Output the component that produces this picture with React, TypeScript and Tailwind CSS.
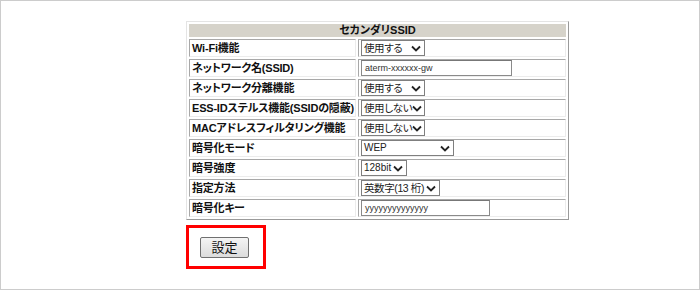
const rows: { label: string; kind: 'select' | 'input'; value: string; w: string }[] = [
  { label: 'Wi-Fi機能', kind: 'select', value: '使用する', w: 'w-[64px]' },
  { label: 'ネットワーク名(SSID)', kind: 'input', value: 'aterm-xxxxxx-gw', w: 'w-[151px]' },
  { label: 'ネットワーク分離機能', kind: 'select', value: '使用する', w: 'w-[64px]' },
  { label: 'ESS-IDステルス機能(SSIDの隠蔽)', kind: 'select', value: '使用しない', w: 'w-[64px]' },
  { label: 'MACアドレスフィルタリング機能', kind: 'select', value: '使用しない', w: 'w-[64px]' },
  { label: '暗号化モード', kind: 'select', value: 'WEP', w: 'w-[93px]' },
  { label: '暗号強度', kind: 'select', value: '128bit', w: 'w-[46px]' },
  { label: '指定方法', kind: 'select', value: '英数字(13 桁)', w: 'w-[79px]' },
  { label: '暗号化キー', kind: 'input', value: 'yyyyyyyyyyyyyy', w: 'w-[129px]' },
]

function Chevron() {
  return (
    <svg width="10" height="7" viewBox="0 0 10 7" className="shrink-0">
      <path d="M1 1.5 L5 5.5 L9 1.5" fill="none" stroke="#222" strokeWidth="1.8" />
    </svg>
  )
}

function FakeSelect({ value, w }: { value: string; w: string }) {
  const small = /^[A-Za-z0-9]/.test(value)
  return (
    <div
      className={`${w} h-[16px] border border-[#7f7f7f] bg-white flex items-center justify-between pl-[2px] pr-[3px] ${
        small ? 'text-[10px]' : 'text-[10.5px] tracking-[-0.4px]'
      } text-[#222] leading-none [font-feature-settings:'palt'] overflow-hidden`}
    >
      <span className="whitespace-nowrap">{value}</span>
      <Chevron />
    </div>
  )
}

function FakeInput({ value, w }: { value: string; w: string }) {
  return (
    <div
      className={`${w} h-[16px] border border-[#8a8a8a] border-t-[#777] bg-white flex items-center pl-[3px] text-[9px] text-[#333] leading-none`}
    >
      {value}
    </div>
  )
}

export default function App() {
  return (
    <div
      className="w-[700px] h-[290px] border border-[#cccccc] bg-white"
      style={{ fontFamily: '"Liberation Sans", "Noto Sans CJK JP", sans-serif' }}
    >
      <div className="pl-[185px] pt-[20px]">
        <table className="table-fixed w-[383px] border-separate border-spacing-[2px] border border-t-[#e4e4e4] border-l-[#e4e4e4] border-r-[#9a9a9a] border-b-[#9a9a9a] bg-white">
          <colgroup>
            <col className="w-[167px]" />
            <col />
          </colgroup>
          <tbody>
            <tr>
              <td
                colSpan={2}
                className="h-[11px] p-0 bg-[#d6d3ca] text-center text-[11px] font-bold text-[#111] leading-[11px] border border-[#d6d3ca] [font-feature-settings:'palt']"
              >
                セカンダリSSID
              </td>
            </tr>
            {rows.map((r) => (
              <tr key={r.label}>
                <td className="h-[18px] p-0 pl-[2px] text-[11px] font-bold text-[#111] leading-none whitespace-nowrap overflow-hidden tracking-[-0.2px] [font-feature-settings:'palt'] border border-t-[#a8a8a8] border-l-[#a8a8a8] border-r-[#ececec] border-b-[#ececec]">
                  {r.label}
                </td>
                <td className="h-[18px] p-0 pl-[2px] border border-t-[#a8a8a8] border-l-[#a8a8a8] border-r-[#ececec] border-b-[#ececec]">
                  {r.kind === 'select' ? <FakeSelect value={r.value} w={r.w} /> : <FakeInput value={r.value} w={r.w} />}
                </td>
              </tr>
            ))}
          </tbody>
        </table>
      </div>
      <div className="ml-[185px] mt-[5px] w-[80px] h-[44px] border-[3px] border-[#ff0000] flex items-center pl-[11px]">
        <button className="w-[49px] h-[21px] border border-[#707070] rounded-[2px] bg-gradient-to-b from-[#f4f4f4] to-[#dcdcdc] text-[13px] text-[#111] leading-none">
          設定
        </button>
      </div>
    </div>
  )
}
